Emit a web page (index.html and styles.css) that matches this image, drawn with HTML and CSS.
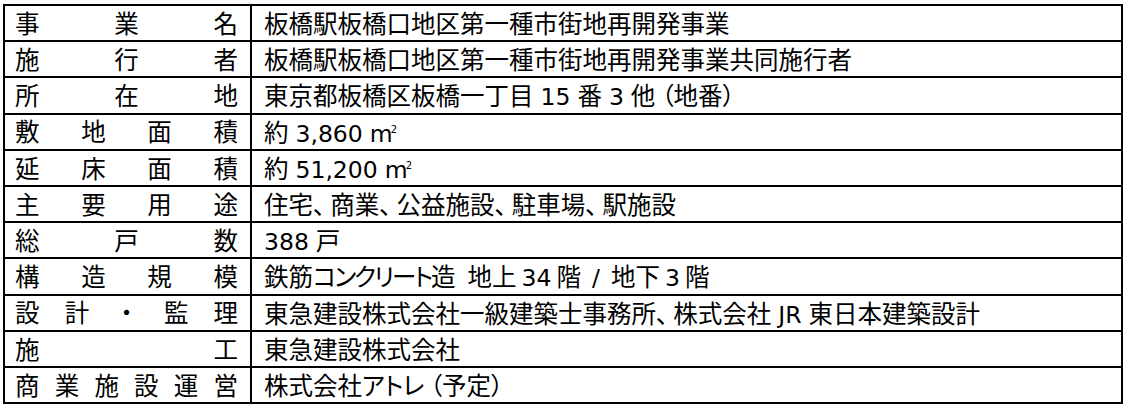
FILE: index.html
```html
<!DOCTYPE html>
<html lang="ja">
<head>
<meta charset="utf-8">
<title>事業概要</title>
<link rel="stylesheet" href="styles.css">
</head>
<body>
<div class="sheet">
  <div class="label"><span>事</span><span>業</span><span>名</span></div>
  <div class="value">板橋駅板橋口地区第一種市街地再開発事業</div>

  <div class="label"><span>施</span><span>行</span><span>者</span></div>
  <div class="value">板橋駅板橋口地区第一種市街地再開発事業共同施行者</div>

  <div class="label"><span>所</span><span>在</span><span>地</span></div>
  <div class="value">東京都板橋区板橋一丁目<span class="lat">15</span>番<span class="lat">3</span>他<span class="po">（</span>地番<span class="pc">）</span></div>

  <div class="label"><span>敷</span><span>地</span><span>面</span><span>積</span></div>
  <div class="value">約<span class="lat">3,860</span><span class="m2">m<sup>2</sup></span></div>

  <div class="label"><span>延</span><span>床</span><span>面</span><span>積</span></div>
  <div class="value">約<span class="lat">51,200</span><span class="m2">m<sup>2</sup></span></div>

  <div class="label"><span>主</span><span>要</span><span>用</span><span>途</span></div>
  <div class="value">住宅<span class="p">、</span>商業<span class="p">、</span>公益施設<span class="p">、</span>駐車場<span class="p">、</span>駅施設</div>

  <div class="label"><span>総</span><span>戸</span><span>数</span></div>
  <div class="value"><span class="lat first">388</span>戸</div>

  <div class="label"><span>構</span><span>造</span><span>規</span><span>模</span></div>
  <div class="value">鉄筋<span class="kana tight">コンクリート</span>造<span class="gap"></span>地上<span class="lat sm">34</span>階<span class="lat slash">/</span>地下<span class="lat sm">3</span>階</div>

  <div class="label"><span>設</span><span>計</span><span>・</span><span>監</span><span>理</span></div>
  <div class="value">東急建設株式会社一級建築士事務所<span class="p">、</span>株式会社<span class="lat">JR</span>東日本建築設計</div>

  <div class="label"><span>施</span><span>工</span></div>
  <div class="value">東急建設株式会社</div>

  <div class="label"><span>商</span><span>業</span><span>施</span><span>設</span><span>運</span><span>営</span></div>
  <div class="value">株式会社<span class="kana">アトレ</span><span class="po">（</span>予定<span class="pc">）</span></div>
</div>
</body>
</html>
```

FILE: styles.css
```css
html, body {
  margin: 0;
  padding: 0;
  background: #fff;
}

body {
  font-family: "Noto Sans CJK JP", "Noto Sans", sans-serif;
  color: #000;
}

.sheet {
  margin: 4px 0 0 3px;
  width: 1120px;
  display: grid;
  grid-template-columns: 247px 1fr;
  grid-auto-rows: 36.2px;
  border-top: 2px solid #000;
  border-left: 2px solid #000;
  box-sizing: border-box;
}

.label, .value {
  box-sizing: border-box;
  border-right: 2px solid #000;
  border-bottom: 2px solid #000;
  font-size: 24.5px;
  white-space: nowrap;
}

.label {
  display: flex;
  align-items: center;
  justify-content: space-between;
  line-height: 1;
  padding: 0 12px 0 10px;
}

.value {
  display: block;
  line-height: 34px;
  padding: 0 0 0 12px;
}

.kana {
  font-feature-settings: "palt";
  letter-spacing: -0.5px;
}

.kana.tight {
  letter-spacing: -2px;
}

.p {
  font-feature-settings: "palt";
  margin-right: 5px;
}

.po {
  font-feature-settings: "palt";
  margin-left: 6px;
}

.pc {
  font-feature-settings: "palt";
}

.lat {
  font-family: "DejaVu Sans", "Noto Sans", sans-serif;
  font-size: 23.5px;
  margin: 0 7px;
}

.lat.first {
  margin-left: 0;
}

.lat.sm {
  margin: 0 5px;
}

.lat.slash {
  margin: 0 11px;
}

.gap {
  display: inline-block;
  width: 12px;
}

.m2 {
  font-family: "DejaVu Sans", sans-serif;
  font-size: 23.5px;
}

.m2 sup {
  font-size: 10px;
  line-height: 0;
  vertical-align: 9px;
  margin-left: -2px;
}
```
